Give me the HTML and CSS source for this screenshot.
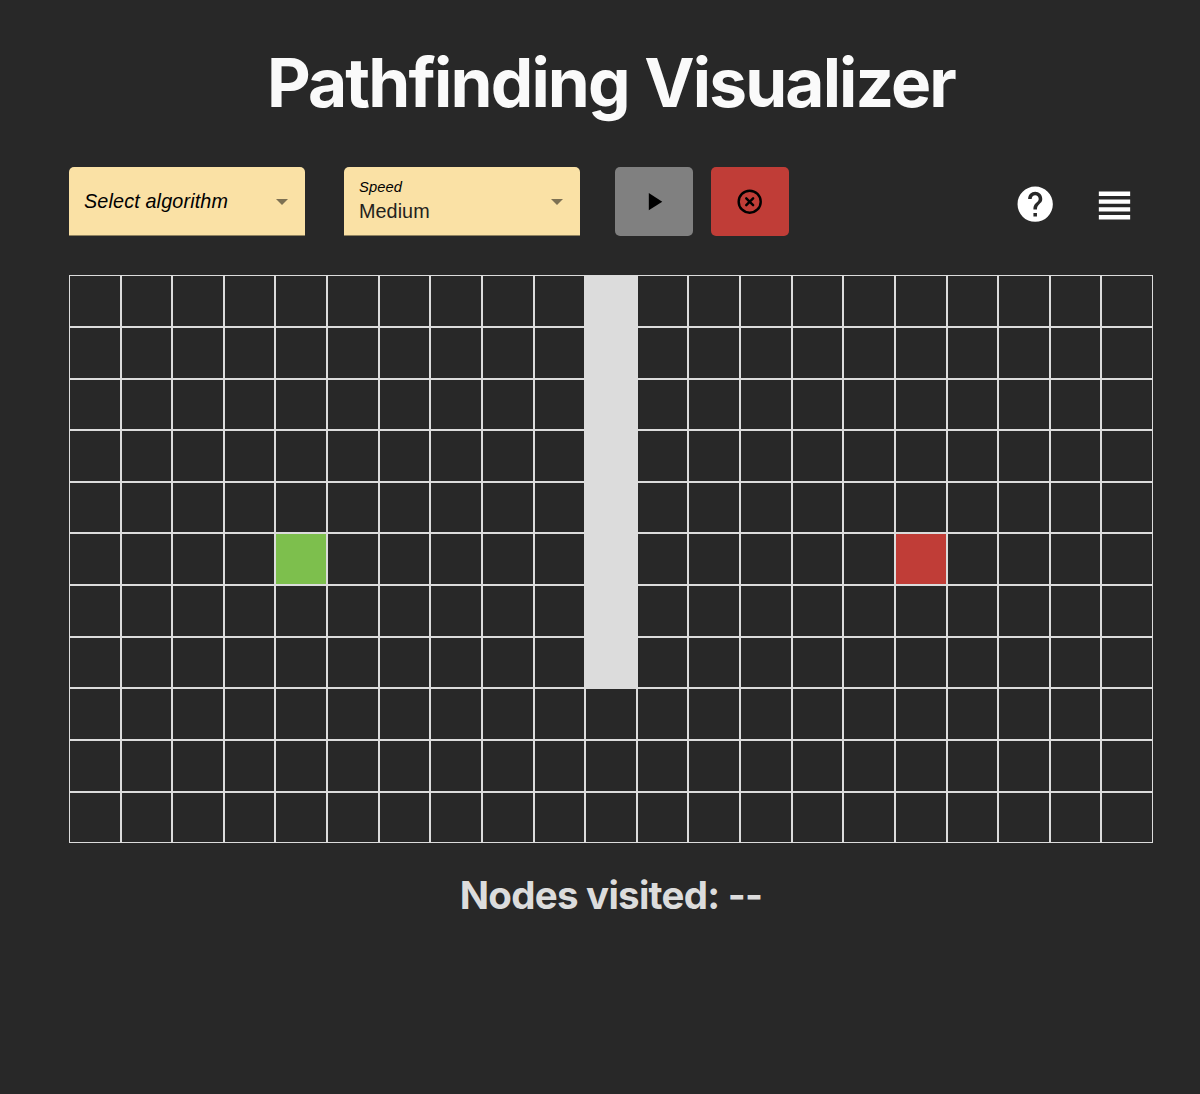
FILE: index.html
```html
<!DOCTYPE html>
<html lang="en">
<head>
<meta charset="utf-8">
<title>Pathfinding Visualizer</title>
<link rel="stylesheet" href="styles.css">
</head>
<body>
<main class="app">
  <h1 class="title">Pathfinding Visualizer</h1>
  <div class="toolbar">
    <div class="select select-algorithm">
      <div class="select-text"><span class="placeholder">Select algorithm</span></div>
      <svg class="arrow" viewBox="0 0 12 6"><path d="M0 0h12L6 6z"/></svg>
    </div>
    <div class="select select-speed">
      <div class="select-text"><span class="label">Speed</span><span class="value">Medium</span></div>
      <svg class="arrow" viewBox="0 0 12 6"><path d="M0 0h12L6 6z"/></svg>
    </div>
    <button class="button button-play" aria-label="Start"><svg class="button-icon" viewBox="0 0 24 24"><path d="M8 5v14l11-7z"/></svg></button>
    <button class="button button-clear" aria-label="Clear"><svg class="button-icon" viewBox="0 0 24 24"><g fill="none" stroke="#000" stroke-width="2"><circle cx="12" cy="12" r="9"/><path stroke-linecap="round" d="M9.2 9.2l5.6 5.6M14.8 9.2l-5.6 5.6"/></g></svg></button>
    <svg class="help" viewBox="0 0 24 24"><path d="M12 2C6.48 2 2 6.48 2 12s4.48 10 10 10 10-4.48 10-10S17.52 2 12 2zm1 17h-2v-2h2v2zm2.07-7.75l-.9.92C13.45 12.9 13 13.5 13 15h-2v-.5c0-1.1.45-2.1 1.17-2.83l1.24-1.26c.37-.36.59-.86.59-1.41 0-1.1-.9-2-2-2s-2 .9-2 2H8c0-2.21 1.79-4 4-4s4 1.79 4 4c0 .88-.36 1.68-.93 2.25z"/></svg>
    <svg class="menu" viewBox="0 0 24 24"><path d="M4 15.1h16v-2.2H4zM4 19.1h16v-2.2H4zM4 11.1h16V8.9H4zM4 4.9v2.2h16V4.9z"/></svg>
  </div>
  <div class="board" id="board"></div>
  <h2 class="status">Nodes visited: --</h2>
</main>
<script src="board.js"></script>
</body>
</html>
```
FILE: styles.css
```css
* { box-sizing: border-box; }
body {
  margin: 0;
  min-height: 1094px;
  background: #282828;
  font-family: "Liberation Sans", Arial, sans-serif;
}
.app {
  width: 1084px;
  margin-left: 69px;
  padding-top: 43px;
}
.title {
  margin: 0;
  height: 124px;
  font: 700 67.5px/80px Inter, sans-serif;
  letter-spacing: -1.86px;
  word-spacing: 1.4px;
  text-align: center;
  white-space: nowrap;
  color: #fafafa;
}
.toolbar {
  display: flex;
  align-items: center;
  height: 69px;
}
.select {
  display: flex;
  align-items: center;
  justify-content: space-between;
  width: 236px;
  height: 69px;
  padding: 0 17px 1px 15px;
  background: #fae1a5;
  border-bottom: 1px solid #8f825f;
  border-radius: 5px 5px 0 0;
}
.select-speed { margin: 0 35px 0 39px; }
.select-text { display: flex; flex-direction: column; white-space: nowrap; }
.placeholder { font-size: 19.8px; line-height: 24px; font-style: italic; letter-spacing: .14px; color: #000; }
.label { font-size: 14.7px; line-height: 18px; font-style: italic; letter-spacing: .14px; color: #000; }
.value { margin-top: 2px; font-size: 19.8px; line-height: 26px; letter-spacing: .05px; color: #24221d; }
.arrow { width: 12px; height: 6px; margin-top: 2px; fill: #7d7153; }
.select-algorithm .arrow { margin-right: .4px; }
.button {
  display: flex;
  align-items: center;
  justify-content: center;
  width: 78px;
  height: 69px;
  padding: 0;
  border: 0;
  border-radius: 5px;
}
.button-play { background: #808080; }
.button-clear { margin-left: 18px; background: #c03d37; }
.button-icon { width: 29.4px; height: 29.4px; }
.help { width: 42.4px; height: 42.4px; margin: 5px 0 0 auto; fill: #fff; }
.menu { width: 47px; height: 47px; margin: 7px 15.5px 0 34px; fill: #fff; }
.board {
  display: grid;
  grid-template-columns: repeat(21, 1fr);
  grid-template-rows: repeat(11, 1fr);
  height: 568px;
  margin: 39.3px 0 0;
}
.cell { border: 1px solid #dcdcdc; }
.wall { background: #dcdcdc; }
.start { background: #7dbf4d; }
.target { background: #c03d37; }
.status {
  margin: 27.7px 0 0;
  font: 700 38.5px/48px Inter, sans-serif;
  letter-spacing: -.75px;
  text-align: center;
  white-space: nowrap;
  color: #dcdcdc;
}
```
FILE: board.js
```js
const board = document.getElementById("board");
for (let row = 0; row < 11; row++) {
  for (let col = 0; col < 21; col++) {
    const cell = document.createElement("div");
    cell.className = "cell";
    if (col === 10 && row < 8) cell.classList.add("wall");
    if (row === 5 && col === 4) cell.classList.add("start");
    if (row === 5 && col === 16) cell.classList.add("target");
    board.appendChild(cell);
  }
}
```
